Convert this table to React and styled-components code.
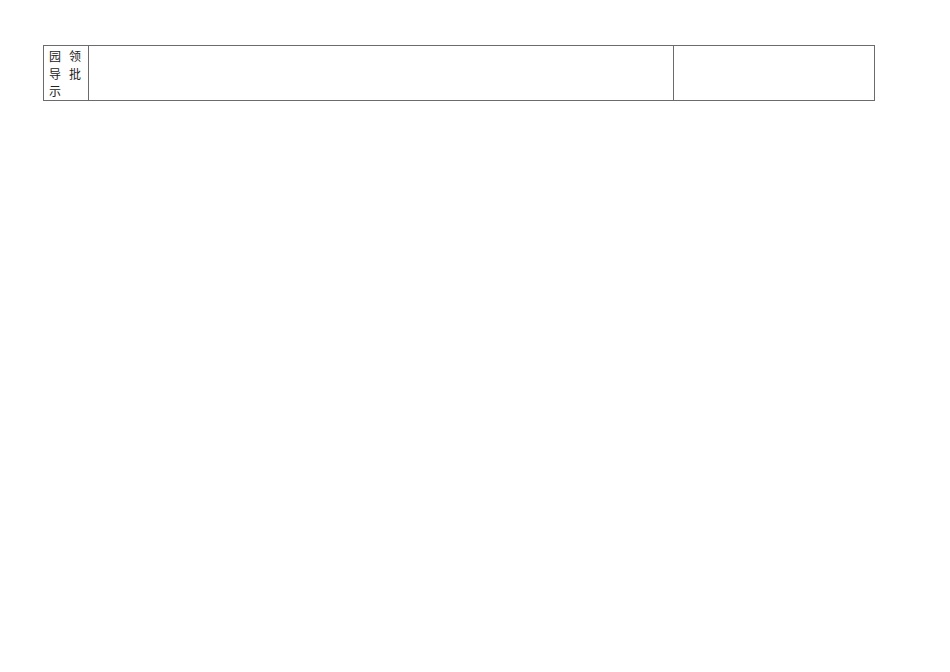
import React from 'react';
import styled, { createGlobalStyle } from 'styled-components';

const GlobalStyle = createGlobalStyle`
    html, body {
        margin: 0;
        padding: 0;
        background: #fff;
    }
    body {
        font-family: "Noto Sans CJK SC", "Liberation Serif", serif;
    }
`;

const Page = styled.div`
    width: 950px;
    height: 672px;
    padding: 45px 0 0 43px;
    box-sizing: border-box;
`;

const Table = styled.table`
    border-collapse: collapse;
    table-layout: fixed;
    width: 831px;
`;

const Col = styled.col`
    width: ${(p) => p.$width}px;
`;

const Cell = styled.td`
    border: 1px solid #6b6b6b;
    padding: 0;
    height: 53px;
    vertical-align: top;
`;

const Label = styled.div`
    font-size: 12px;
    line-height: 17.6px;
    color: #222;
    text-align: justify;
    text-justify: inter-character;
    padding: 1px 7px 0 5px;
`;

export default function App() {
    return (
        <>
            <GlobalStyle />
            <Page>
                <Table>
                    <colgroup>
                        <Col $width={45} />
                        <Col $width={585} />
                        <Col $width={201} />
                    </colgroup>
                    <tbody>
                        <tr>
                            <Cell>
                                <Label>园领导批示</Label>
                            </Cell>
                            <Cell />
                            <Cell />
                        </tr>
                    </tbody>
                </Table>
            </Page>
        </>
    );
}
